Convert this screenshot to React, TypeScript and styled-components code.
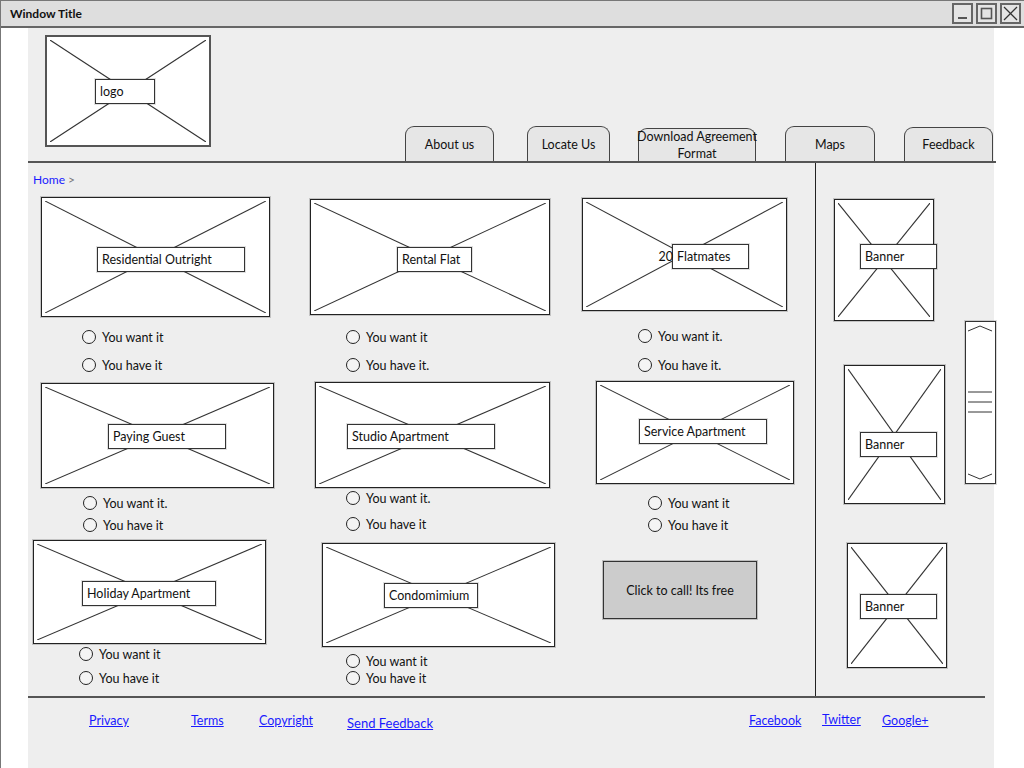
import styled, { createGlobalStyle } from "styled-components";

const GlobalStyle = createGlobalStyle`
  html, body {
    margin: 0;
    padding: 0;
    background: #fff;
  }
  body {
    font-family: Lato, "Open Sans", sans-serif;
    font-size: 12px;
    color: #111;
  }
`;

const Window = styled.div`
  width: 1024px;
  height: 768px;
  display: flex;
  flex-direction: column;
  overflow: hidden;
  background: #fff;
  box-sizing: border-box;
  border-left: 1px solid #777;
`;

const TitleBar = styled.div`
  height: 28px;
  box-sizing: border-box;
  display: flex;
  align-items: center;
  padding: 0 3px 0 9px;
  background: #dedede;
  border-top: 1px solid #777;
  border-bottom: 2px solid #666;
  flex-shrink: 0;
`;

const Title = styled.span`
  font-weight: 700;
  font-size: 12px;
`;

const WinButtons = styled.div`
  margin-left: auto;
  display: flex;
  gap: 3px;
`;

const WinButton = styled.div`
  width: 21px;
  height: 21px;
  box-sizing: border-box;
  border: 2px solid #666;
  background: #e4e4e4;
  svg {
    display: block;
    width: 100%;
    height: 100%;
  }
`;

const Frame = styled.div`
  flex: 1;
  display: flex;
`;

const Gutter = styled.div<{ $w: number }>`
  width: ${(p) => p.$w}px;
  flex-shrink: 0;
`;

const Canvas = styled.div`
  width: 966px;
  flex-shrink: 0;
  background: #eeeeee;
  display: flex;
  flex-direction: column;
`;

const Header = styled.div`
  height: 133px;
  display: flex;
  align-items: flex-end;
  border-bottom: 2px solid #555;
  margin-right: -2px;
`;

const Logo = styled.div`
  align-self: flex-start;
  position: relative;
  width: 166px;
  height: 112px;
  margin: 7px 0 0 17px;
  box-sizing: border-box;
  background: #fff;
  border: 2px solid #555;
`;

const Tab = styled.div<{ $ml: number; $w: number; $h: number }>`
  margin-left: ${(p) => p.$ml}px;
  width: ${(p) => p.$w}px;
  height: ${(p) => p.$h}px;
  box-sizing: border-box;
  display: flex;
  align-items: center;
  justify-content: center;
  text-align: center;
  white-space: nowrap;
  line-height: 17px;
  font-size: 12.5px;
  background: #e6e6e6;
  border: 1px solid #444;
  border-bottom: none;
  border-radius: 9px 9px 0 0;
`;

const Body = styled.div`
  height: 533px;
  display: flex;
`;

const Main = styled.div`
  width: 788px;
  flex-shrink: 0;
  padding-left: 5px;
  box-sizing: border-box;
  border-right: 1px solid #222;
`;

const Breadcrumb = styled.div`
  padding-top: 9px;
  height: 16px;
  line-height: 16px;
  font-size: 12px;
  a {
    color: #1a1aff;
    text-decoration: none;
  }
  span {
    color: #777;
    margin-left: 3px;
  }
`;

const Grid = styled.div`
  margin-top: 9px;
  display: grid;
  grid-template-columns: 272px 272px 1fr;
  grid-template-rows: 184px 159px 1fr;
`;

const Cell = styled.div<{ $ml: number; $mt: number }>`
  display: flex;
  flex-direction: column;
  align-items: flex-start;
  margin-left: ${(p) => p.$ml}px;
  margin-top: ${(p) => p.$mt}px;
`;

const Picture = styled.div<{ $w: number; $h: number }>`
  position: relative;
  width: ${(p) => p.$w}px;
  height: ${(p) => p.$h}px;
  box-sizing: border-box;
  background: #fff;
  border: 1px solid #222;
  box-shadow: 0 0 0 1px rgba(0, 0, 0, 0.18);
`;

const CrossSvg = styled.svg`
  position: absolute;
  inset: 3px;
  width: calc(100% - 6px);
  height: calc(100% - 6px);
  line {
    stroke: #333;
    stroke-width: 1.1;
  }
`;

const Label = styled.div<{ $x: number; $y: number; $w: number }>`
  position: absolute;
  left: ${(p) => p.$x}px;
  top: ${(p) => p.$y}px;
  width: ${(p) => p.$w}px;
  height: 25px;
  box-sizing: border-box;
  padding-left: 4px;
  line-height: 23px;
  font-size: 12.5px;
  white-space: nowrap;
  background: #fff;
  border: 1px solid #333;
  box-shadow: 0 0 0 1px rgba(0, 0, 0, 0.12);
`;

const Prefix = styled.span`
  position: absolute;
  right: 100%;
  top: 0;
  line-height: 23px;
`;

const RadioList = styled.div<{ $ml: number; $mt: number; $gap: number }>`
  display: flex;
  flex-direction: column;
  margin-left: ${(p) => p.$ml}px;
  margin-top: ${(p) => p.$mt}px;
  gap: ${(p) => p.$gap}px;
`;

const RadioRow = styled.label`
  display: flex;
  align-items: center;
  gap: 6px;
  height: 16px;
  font-size: 12.5px;
`;

const RadioDot = styled.span`
  width: 14px;
  height: 14px;
  box-sizing: border-box;
  border: 1.5px solid #222;
  border-radius: 50%;
  background: #f4f4f4;
`;

const CallButton = styled.div`
  width: 154px;
  height: 58px;
  box-sizing: border-box;
  display: flex;
  align-items: center;
  justify-content: center;
  background: #cccccc;
  border: 1px solid #333;
  box-shadow: 0 0 0 1px rgba(0, 0, 0, 0.2);
  font-size: 12.5px;
`;

const Sidebar = styled.div`
  flex: 1;
  display: flex;
`;

const BannerColumn = styled.div`
  width: 131px;
  flex-shrink: 0;
  display: flex;
  flex-direction: column;
  align-items: flex-start;
`;

const Banner = styled(Picture)<{ $ml: number; $mt: number }>`
  margin-left: ${(p) => p.$ml}px;
  margin-top: ${(p) => p.$mt}px;
`;

const Scrollbar = styled.div`
  margin-top: 158px;
  margin-left: 18px;
  width: 31px;
  height: 163px;
  flex-shrink: 0;
  box-sizing: border-box;
  background: #fff;
  border: 1px solid #333;
  box-shadow: 0 0 0 1px rgba(0, 0, 0, 0.15);
  svg {
    display: block;
    width: 100%;
    height: 100%;
  }
`;

const Footer = styled.div`
  flex: 1;
  margin-right: 9px;
  border-top: 2px solid #555;
  display: flex;
  align-items: flex-start;
  padding-top: 15px;
`;

const FooterLink = styled.a<{ $ml: number; $w: number; $mt?: number; $size?: number }>`
  display: inline-block;
  flex-shrink: 0;
  margin-left: ${(p) => p.$ml}px;
  width: ${(p) => p.$w}px;
  margin-top: ${(p) => p.$mt ?? 0}px;
  font-size: ${(p) => p.$size ?? 12.5}px;
  line-height: 16px;
  color: #1a1aff;
  text-decoration: underline;
  white-space: nowrap;
`;

const Cross = () => (
  <CrossSvg viewBox="0 0 100 100" preserveAspectRatio="none">
    <line x1="0" y1="0" x2="100" y2="100" vectorEffect="non-scaling-stroke" />
    <line x1="100" y1="0" x2="0" y2="100" vectorEffect="non-scaling-stroke" />
  </CrossSvg>
);

type CardData = {
  title: string;
  prefix?: string;
  ml: number;
  mt: number;
  w: number;
  h: number;
  lx: number;
  ly: number;
  lw: number;
  rx: number;
  r1: number;
  gap: number;
  opts: string[];
};

const cards: CardData[] = [
  { title: "Residential Outright", ml: 8, mt: 0, w: 229, h: 120, lx: 55, ly: 49, lw: 148, rx: 41, r1: 20, gap: 28, opts: ["You want it", "You have it"] },
  { title: "Rental Flat", ml: 5, mt: 2, w: 240, h: 116, lx: 86, ly: 47, lw: 75, rx: 36, r1: 22, gap: 28, opts: ["You want it", "You have it."] },
  { title: "Flatmates", prefix: "20", ml: 5, mt: 1, w: 205, h: 113, lx: 89, ly: 45, lw: 77, rx: 56, r1: 25, gap: 29, opts: ["You want it.", "You have it."] },
  { title: "Paying Guest", ml: 8, mt: 2, w: 233, h: 105, lx: 66, ly: 40, lw: 118, rx: 42, r1: 15, gap: 22, opts: ["You want it.", "You have it"] },
  { title: "Studio Apartment", ml: 10, mt: 1, w: 235, h: 106, lx: 31, ly: 41, lw: 148, rx: 31, r1: 10, gap: 26, opts: ["You want it.", "You have it"] },
  { title: "Service Apartment", ml: 19, mt: 0, w: 198, h: 103, lx: 42, ly: 37, lw: 128, rx: 52, r1: 19, gap: 22, opts: ["You want it", "You have it"] },
  { title: "Holiday Apartment", ml: 0, mt: 0, w: 233, h: 104, lx: 48, ly: 40, lw: 134, rx: 46, r1: 10, gap: 24, opts: ["You want it", "You have it"] },
  { title: "Condomimium", ml: 17, mt: 3, w: 233, h: 104, lx: 61, ly: 39, lw: 94, rx: 24, r1: 14, gap: 17, opts: ["You want it", "You have it"] },
];

const tabs = [
  { text: ["About us"], ml: 194, w: 89, h: 35 },
  { text: ["Locate Us"], ml: 33, w: 83, h: 35 },
  { text: ["Download Agreement", "Format"], ml: 28, w: 118, h: 33 },
  { text: ["Maps"], ml: 29, w: 90, h: 35 },
  { text: ["Feedback"], ml: 29, w: 89, h: 34 },
];

const banners = [
  { ml: 18, mt: 36, w: 100, h: 122, lx: 25, ly: 44 },
  { ml: 28, mt: 44, w: 101, h: 139, lx: 15, ly: 66 },
  { ml: 31, mt: 39, w: 100, h: 125, lx: 12, ly: 50 },
];

// start positions copied from the mockup; widths keep the next link in place
const footerLinks = [
  { text: "Privacy", ml: 61, w: 40 },
  { text: "Terms", ml: 62, w: 36 },
  { text: "Copyright", ml: 32, w: 54 },
  { text: "Send Feedback", ml: 34, w: 85, mt: 2, size: 13 },
  { text: "Facebook", ml: 317, w: 53 },
  { text: "Twitter", ml: 20, w: 43, mt: -1 },
  { text: "Google+", ml: 17, w: 44 },
];

function Card({ c }: { c: CardData }) {
  return (
    <Cell $ml={c.ml} $mt={c.mt}>
      <Picture $w={c.w} $h={c.h}>
        <Cross />
        <Label $x={c.lx} $y={c.ly} $w={c.lw}>
          {c.prefix && <Prefix>{c.prefix}</Prefix>}
          {c.title}
        </Label>
      </Picture>
      <RadioList $ml={c.rx} $mt={c.r1 - 8} $gap={c.gap - 16}>
        {c.opts.map((o) => (
          <RadioRow key={o}>
            <RadioDot />
            {o}
          </RadioRow>
        ))}
      </RadioList>
    </Cell>
  );
}

export default function App() {
  return (
    <>
      <GlobalStyle />
      <Window>
        <TitleBar>
          <Title>Window Title</Title>
          <WinButtons>
            <WinButton>
              <svg viewBox="0 0 17 17">
                <line x1="4" y1="13" x2="13" y2="13" stroke="#555" strokeWidth="2" />
              </svg>
            </WinButton>
            <WinButton>
              <svg viewBox="0 0 17 17">
                <rect x="3.5" y="3.5" width="10" height="10" fill="none" stroke="#555" strokeWidth="1.6" />
              </svg>
            </WinButton>
            <WinButton>
              <svg viewBox="0 0 17 17">
                <line x1="2" y1="2" x2="15" y2="15" stroke="#333" strokeWidth="1.3" />
                <line x1="15" y1="2" x2="2" y2="15" stroke="#333" strokeWidth="1.3" />
              </svg>
            </WinButton>
          </WinButtons>
        </TitleBar>
        <Frame>
          <Gutter $w={27} />
          <Canvas>
            <Header>
              <Logo>
                <Cross />
                <Label $x={48} $y={42} $w={60}>
                  logo
                </Label>
              </Logo>
              {tabs.map((t) => (
                <Tab key={t.text[0]} $ml={t.ml} $w={t.w} $h={t.h}>
                  <span>
                    {t.text.map((line, i) => (
                      <span key={line}>
                        {i > 0 && <br />}
                        {line}
                      </span>
                    ))}
                  </span>
                </Tab>
              ))}
            </Header>
            <Body>
              <Main>
                <Breadcrumb>
                  <a href="#">Home</a>
                  <span>&gt;</span>
                </Breadcrumb>
                <Grid>
                  {cards.map((c) => (
                    <Card key={c.title} c={c} />
                  ))}
                  <Cell $ml={26} $mt={21}>
                    <CallButton>Click to call! Its free</CallButton>
                  </Cell>
                </Grid>
              </Main>
              <Sidebar>
                <BannerColumn>
                  {banners.map((b, i) => (
                    <Banner key={i} $ml={b.ml} $mt={b.mt} $w={b.w} $h={b.h}>
                      <Cross />
                      <Label $x={b.lx} $y={b.ly} $w={77}>
                        Banner
                      </Label>
                    </Banner>
                  ))}
                </BannerColumn>
                <Scrollbar>
                  <svg viewBox="0 0 29 161" preserveAspectRatio="none">
                    <polyline points="2,9 14,4 26,9" fill="none" stroke="#333" strokeWidth="1" />
                    <line x1="2" y1="70" x2="26" y2="70" stroke="#333" strokeWidth="1" />
                    <line x1="2" y1="80" x2="26" y2="80" stroke="#333" strokeWidth="1" />
                    <line x1="2" y1="90" x2="26" y2="90" stroke="#333" strokeWidth="1" />
                    <polyline points="2,152 14,157 26,152" fill="none" stroke="#333" strokeWidth="1" />
                  </svg>
                </Scrollbar>
              </Sidebar>
            </Body>
            <Footer>
              {footerLinks.map((l) => (
                <FooterLink key={l.text} href="#" $ml={l.ml} $w={l.w} $mt={l.mt} $size={l.size}>
                  {l.text}
                </FooterLink>
              ))}
            </Footer>
          </Canvas>
          <Gutter $w={30} />
        </Frame>
      </Window>
    </>
  );
}
